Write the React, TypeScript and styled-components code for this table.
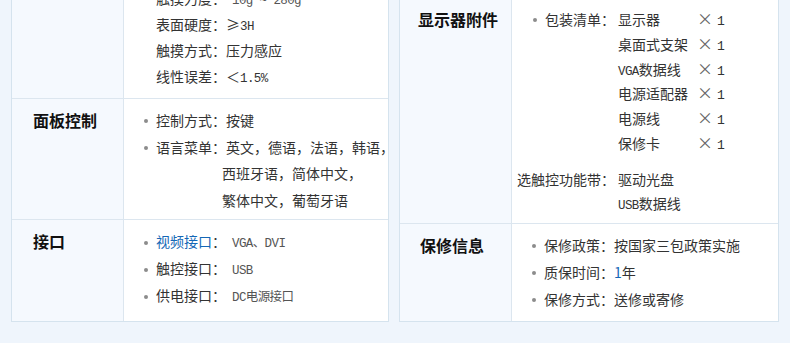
import styled, { createGlobalStyle } from "styled-components";

const GlobalStyle = createGlobalStyle`
  html, body {
    margin: 0;
    padding: 0;
    background: #eff5fc;
  }
  body {
    font-family: "Noto Sans CJK SC", "Noto Sans", sans-serif;
    font-size: 14px;
    color: #333;
  }
`

const Page = styled.div`
  height: 343px;
  overflow: hidden;
  background: #eff5fc;
`

// the page is scrolled: the first rows of both cards lie above the window
const Columns = styled.div`
  display: grid;
  grid-template-columns: 378px 380px;
  column-gap: 10px;
  margin-top: -51px;
  padding: 0 0 20px 11px;
`

const Card = styled.section`
  display: flex;
  flex-direction: column;
  background: #fff;
  border: 1px solid #d5e3ee;
`

const Row = styled.div<{ $grow?: boolean }>`
  display: grid;
  grid-template-columns: 112px 1fr;
  flex: ${(p) => (p.$grow ? 1 : "none")};

  & + & {
    border-top: 1px solid #dce6ef;
  }
`

const Label = styled.div<{ $pt: number; $lh: number; $pl: number }>`
  padding: ${(p) => p.$pt}px 0 0 ${(p) => p.$pl}px;
  line-height: ${(p) => p.$lh}px;
  font-size: 16px;
  font-weight: 700;
  color: #111;
  background: #f5f9fe;
  border-right: 1px solid #dce6ef;
  white-space: nowrap;
`

const List = styled.ul<{ $pt: number; $pb: number; $lh: number }>`
  margin: 0;
  padding: ${(p) => p.$pt}px 0 ${(p) => p.$pb}px 32px;
  list-style: none;
  line-height: ${(p) => p.$lh}px;
`

const Item = styled.li<{ $bullet?: boolean; $indent?: number }>`
  position: relative;
  white-space: nowrap;
  padding-left: ${(p) => p.$indent ?? 0}px;

  &::before {
    content: "";
    display: ${(p) => (p.$bullet ? "block" : "none")};
    position: absolute;
    left: -12px;
    top: 50%;
    width: 4px;
    height: 4px;
    margin-top: -1px;
    border-radius: 50%;
    background: #8c8c8c;
  }
`

const Bulleted = styled.span`
  position: relative;

  &::before {
    content: "";
    position: absolute;
    left: -12px;
    top: 50%;
    width: 4px;
    height: 4px;
    margin-top: -1px;
    border-radius: 50%;
    background: #8c8c8c;
  }
`

const Mono = styled.span<{ $muted?: boolean; $gap?: number }>`
  font-family: "Liberation Mono", "Noto Sans CJK SC", monospace;
  font-size: 12.5px;
  line-height: 1;
  letter-spacing: -0.6px;
  color: ${(p) => (p.$muted ? "#555" : "#333")};
  margin-left: ${(p) => p.$gap ?? 0}px;
`

const Link = styled.a`
  color: #1467b6;
  text-decoration: none;
`

const Blue = styled.span`
  color: #1467b6;
`

const SpecBlock = styled.div<{ $pt: number; $pb: number }>`
  display: grid;
  grid-template-columns: 98px 1fr;
  column-gap: 3px;
  padding: ${(p) => p.$pt}px 0 ${(p) => p.$pb}px 5px;
  line-height: 24.8px;
`

const Key = styled.div<{ $gapTop?: number }>`
  text-align: right;
  white-space: nowrap;
  margin-top: ${(p) => p.$gapTop ?? 0}px;
`

const Values = styled.div<{ $gapTop?: number }>`
  margin-top: ${(p) => p.$gapTop ?? 0}px;
  white-space: nowrap;
`

const PackLine = styled.div`
  height: 24.8px;
`

const PackName = styled.span`
  display: inline-block;
  width: 79px;
`

const Times = styled.span`
  display: inline-block;
  width: 20px;
  font-size: 16px;
  line-height: 1;
  color: #666;
`

const Count = styled.span`
  font-family: "Liberation Mono", monospace;
  font-size: 13px;
  line-height: 1;
`

const pack = [
  { name: "显示器" },
  { name: "桌面式支架" },
  { name: "VGA数据线", latin: "VGA", rest: "数据线" },
  { name: "电源适配器" },
  { name: "电源线" },
  { name: "保修卡" },
]

const App: React.FC = () => {
  return (
    <Page>
      <GlobalStyle />
      <Columns>
        <Card>
          <Row>
            <Label $pt={9} $lh={26} $pl={21}>触摸屏</Label>
            <List $pt={9} $pb={9} $lh={26}>
              <Item>触摸屏类型：电阻式</Item>
              <Item>触摸力度：<Mono $muted $gap={6}>10g ~ 280g</Mono></Item>
              <Item>表面硬度：≥<Mono>3H</Mono></Item>
              <Item>触摸方式：压力感应</Item>
              <Item>线性误差：＜<Mono>1.5%</Mono></Item>
            </List>
          </Row>
          <Row>
            <Label $pt={8} $lh={26.5} $pl={21}>面板控制</Label>
            <List $pt={8} $pb={6} $lh={26.5}>
              <Item $bullet>控制方式：按键</Item>
              <Item $bullet>语言菜单：英文，德语，法语，韩语，</Item>
              <Item $indent={66}>西班牙语，简体中文，</Item>
              <Item $indent={66}>繁体中文，葡萄牙语</Item>
            </List>
          </Row>
          <Row $grow>
            <Label $pt={8} $lh={27} $pl={21}>接口</Label>
            <List $pt={8} $pb={8} $lh={27}>
              <Item $bullet>
                <Link href="#">视频接口</Link>：<Mono $muted $gap={6}>VGA、DVI</Mono>
              </Item>
              <Item $bullet>触控接口：<Mono $muted $gap={6}>USB</Mono></Item>
              <Item $bullet>供电接口：<Mono $muted $gap={6}>DC电源接口</Mono></Item>
            </List>
          </Row>
        </Card>

        <Card>
          <Row>
            <Label $pt={9} $lh={26} $pl={18}>功耗</Label>
            <List $pt={9} $pb={12} $lh={26}>
              <Item $bullet>整机功耗：≤<Mono>25W</Mono></Item>
            </List>
          </Row>
          <Row>
            <Label $pt={9} $lh={24.8} $pl={18}>显示器附件</Label>
            <SpecBlock $pt={9} $pb={6.8}>
              <Key>
                <Bulleted>包装清单：</Bulleted>
              </Key>
              <Values>
                {pack.map((p) => (
                  <PackLine key={p.name}>
                    <PackName>
                      {p.latin ? (
                        <>
                          <Mono>{p.latin}</Mono>
                          {p.rest}
                        </>
                      ) : (
                        p.name
                      )}
                    </PackName>
                    <Times>×</Times>
                    <Count>1</Count>
                  </PackLine>
                ))}
              </Values>
              <Key $gapTop={10.8}>选触控功能带：</Key>
              <Values $gapTop={10.8}>
                <div>驱动光盘</div>
                <div>
                  <Mono>USB</Mono>数据线
                </div>
              </Values>
            </SpecBlock>
          </Row>
          <Row $grow>
            <Label $pt={8} $lh={27} $pl={20}>保修信息</Label>
            <List $pt={8} $pb={8} $lh={27}>
              <Item $bullet>保修政策：按国家三包政策实施</Item>
              <Item $bullet>
                质保时间：<Blue>1</Blue>年
              </Item>
              <Item $bullet>保修方式：送修或寄修</Item>
            </List>
          </Row>
        </Card>
      </Columns>
    </Page>
  )
}

export default App
